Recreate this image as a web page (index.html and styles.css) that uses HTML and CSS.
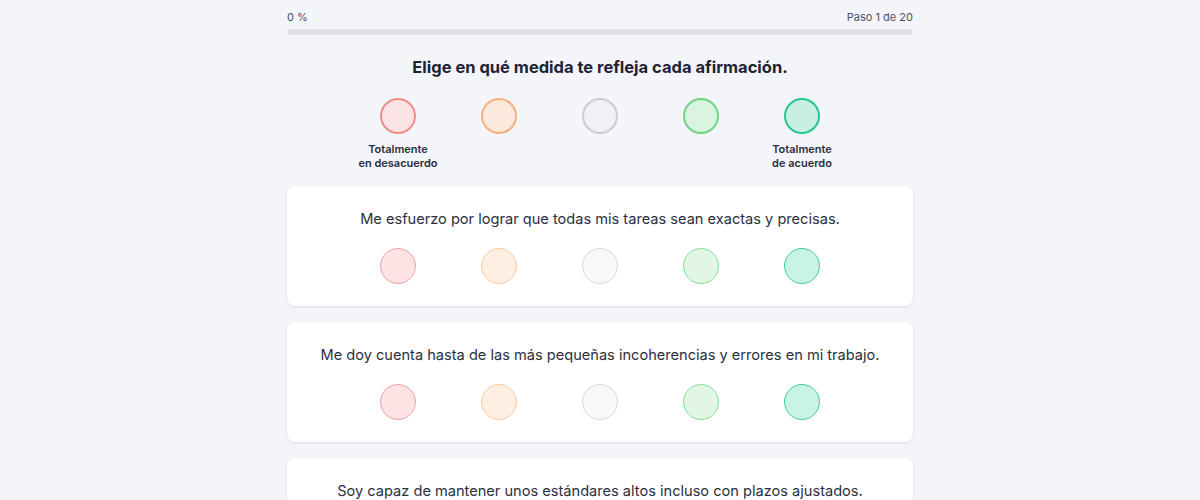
FILE: index.html
```html
<!DOCTYPE html>
<html lang="es">
<head>
<meta charset="utf-8">
<title>Cuestionario</title>
<link rel="stylesheet" href="styles.css">
</head>
<body>
<main class="wrap">
  <div class="progress-head">
    <span>0 %</span>
    <span>Paso 1 de 20</span>
  </div>
  <div class="bar"><div class="bar-fill"></div></div>

  <h1 class="title">Elige en qué medida te refleja cada afirmación.</h1>

  <div class="scale legend">
    <div class="col"><span class="dot big c1"></span><span class="lbl">Totalmente<br>en desacuerdo</span></div>
    <div class="col"><span class="dot big c2"></span></div>
    <div class="col"><span class="dot big c3"></span></div>
    <div class="col"><span class="dot big c4"></span></div>
    <div class="col"><span class="dot big c5"></span><span class="lbl">Totalmente<br>de acuerdo</span></div>
  </div>

  <section class="card">
    <p class="q">Me esfuerzo por lograr que todas mis tareas sean exactas y precisas.</p>
    <div class="scale">
      <div class="col"><span class="dot c1"></span></div>
      <div class="col"><span class="dot c2"></span></div>
      <div class="col"><span class="dot c3"></span></div>
      <div class="col"><span class="dot c4"></span></div>
      <div class="col"><span class="dot c5"></span></div>
    </div>
  </section>

  <section class="card">
    <p class="q">Me doy cuenta hasta de las más pequeñas incoherencias y errores en mi trabajo.</p>
    <div class="scale">
      <div class="col"><span class="dot c1"></span></div>
      <div class="col"><span class="dot c2"></span></div>
      <div class="col"><span class="dot c3"></span></div>
      <div class="col"><span class="dot c4"></span></div>
      <div class="col"><span class="dot c5"></span></div>
    </div>
  </section>

  <section class="card">
    <p class="q">Soy capaz de mantener unos estándares altos incluso con plazos ajustados.</p>
    <div class="scale">
      <div class="col"><span class="dot c1"></span></div>
      <div class="col"><span class="dot c2"></span></div>
      <div class="col"><span class="dot c3"></span></div>
      <div class="col"><span class="dot c4"></span></div>
      <div class="col"><span class="dot c5"></span></div>
    </div>
  </section>
</main>
</body>
</html>
```
FILE: styles.css
```css
* { box-sizing: border-box; }
html, body { margin: 0; padding: 0; }
body {
  background: #f4f5f9;
  font-family: Inter, "Noto Sans", "Liberation Sans", sans-serif;
  color: #1f2235;
}
.wrap {
  width: 626px;
  margin: 0 auto;
  padding-top: 10px;
}
.progress-head {
  display: flex;
  justify-content: space-between;
  font-size: 11px;
  line-height: 14px;
  color: #4a5068;
}
.bar {
  margin-top: 5px;
  height: 6px;
  border-radius: 3px;
  background: #dfe2eb;
}
.bar-fill { width: 0; height: 100%; }
.title {
  margin: 21px 0 0;
  font-size: 16.5px;
  line-height: 22px;
  font-weight: 700;
  text-align: center;
  color: #1e2235;
}
.scale {
  display: grid;
  grid-template-columns: repeat(5, 101px);
  justify-content: center;
}
.legend { margin-top: 20px; }
.col {
  display: flex;
  flex-direction: column;
  align-items: center;
}
.dot {
  display: block;
  width: 36px;
  height: 36px;
  border-radius: 50%;
  border: 1px solid;
}
.dot.big { border-width: 2px; }
.lbl {
  margin-top: 8px;
  font-size: 11px;
  line-height: 14px;
  font-weight: 600;
  text-align: center;
  color: #2a2e40;
  white-space: nowrap;
}
.legend .c1 { background: #fbe2e4; border-color: #f08c8c; }
.legend .c2 { background: #fce9de; border-color: #f6b07c; }
.legend .c3 { background: #f0f1f4; border-color: #cdcdd2; }
.legend .c4 { background: #dbf4df; border-color: #6fd488; }
.legend .c5 { background: #c8efe3; border-color: #27c690; }
.card .c1 { background: #fee2e4; border-color: #f0a3a5; }
.card .c2 { background: #ffefe2; border-color: #f8c89e; }
.card .c3 { background: #f8f8f8; border-color: #d6d6d8; }
.card .c4 { background: #e1f7e4; border-color: #80dc98; }
.card .c5 { background: #c9f3e4; border-color: #3ccd9c; }
.card {
  margin-top: 16px;
  background: #ffffff;
  border-radius: 8px;
  box-shadow: 0 1px 3px rgba(30, 35, 60, 0.08), 0 1px 2px rgba(30, 35, 60, 0.05);
  padding: 22px 0 22px;
}
.q {
  margin: 0 0 18px;
  font-size: 14.6px;
  line-height: 22px;
  text-align: center;
  color: #2b2f3e;
}
```
